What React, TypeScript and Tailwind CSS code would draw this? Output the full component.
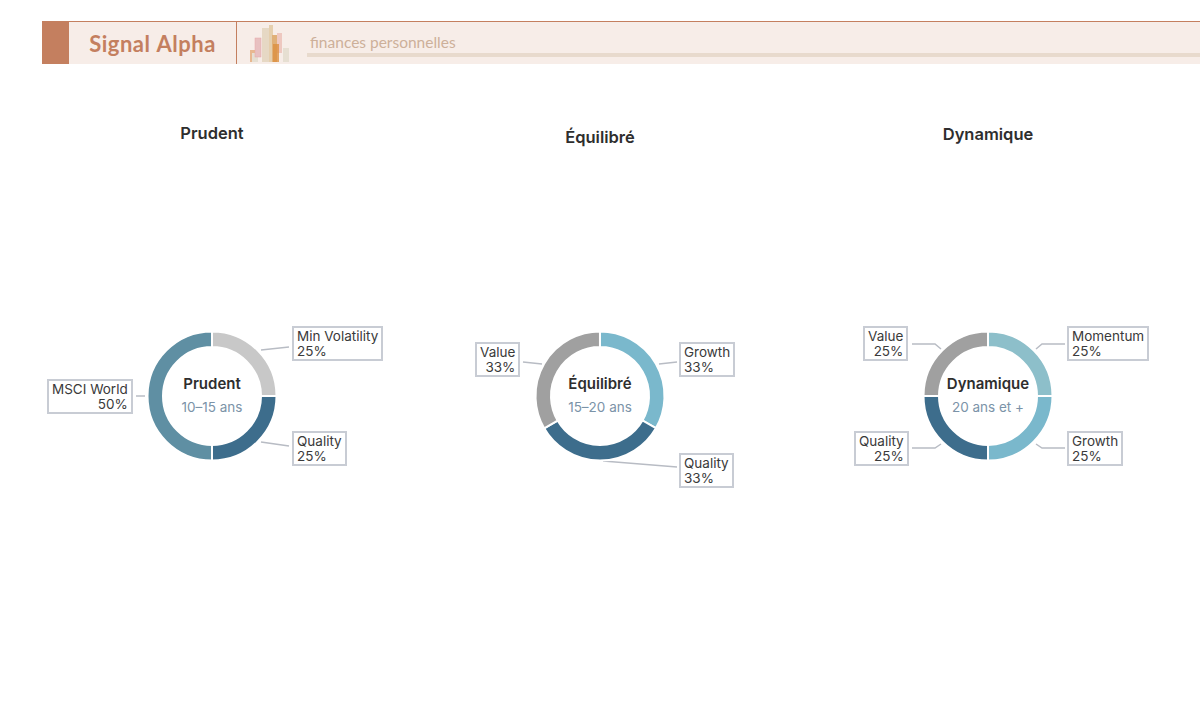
const CX = 194;
const CY = 100;
const R_OUT = 64.5;
const R_IN = 49;

type Segment = { value: number; color: string };
type Label = { name: string; pct: string; pos: string; right?: boolean };

const charts: {
  title: string;
  titleClass: string;
  sub: string;
  segments: Segment[];
  labels: Label[];
  lines: string[];
}[] = [
  {
    title: 'Prudent',
    titleClass: 'mt-[57px]',
    sub: '10–15 ans',
    segments: [
      { value: 25, color: '#c8c8c8' },
      { value: 25, color: '#3d6d8c' },
      { value: 50, color: '#5f8fa3' },
    ],
    labels: [
      { name: 'Min Volatility', pct: '25%', pos: 'left-[274px] top-[30px]' },
      { name: 'Quality', pct: '25%', pos: 'left-[274px] top-[135px]' },
      { name: 'MSCI World', pct: '50%', pos: 'left-[29px] top-[83px]', right: true },
    ],
    lines: ['243,54 271,51', '243,146 271,150', '118,100 127,100'],
  },
  {
    title: 'Équilibré',
    titleClass: 'mt-[61px]',
    sub: '15–20 ans',
    segments: [
      { value: 33.33, color: '#7ab8cc' },
      { value: 33.33, color: '#3d6d8c' },
      { value: 33.33, color: '#a0a0a0' },
    ],
    labels: [
      { name: 'Growth', pct: '33%', pos: 'left-[273px] top-[46px]' },
      { name: 'Quality', pct: '33%', pos: 'left-[273px] top-[157px]' },
      { name: 'Value', pct: '33%', pos: 'left-[69px] top-[46px]', right: true },
    ],
    lines: ['253,68 271,66', '197,165 271,171', '117,66 136,68'],
  },
  {
    title: 'Dynamique',
    titleClass: 'mt-[58px]',
    sub: '20 ans et +',
    segments: [
      { value: 25, color: '#8dbfca' },
      { value: 25, color: '#7ab8cc' },
      { value: 25, color: '#3d6d8c' },
      { value: 25, color: '#a0a0a0' },
    ],
    labels: [
      { name: 'Momentum', pct: '25%', pos: 'left-[273px] top-[30px]' },
      { name: 'Growth', pct: '25%', pos: 'left-[273px] top-[135px]' },
      { name: 'Quality', pct: '25%', pos: 'left-[60px] top-[135px]', right: true },
      { name: 'Value', pct: '25%', pos: 'left-[69px] top-[30px]', right: true },
    ],
    lines: [
      '271,48 248,48 242,53',
      '271,152 248,152 242,148',
      '118,152 141,152 147,148',
      '118,48 141,48 147,53',
    ],
  },
];

const point = (r: number, angle: number) => {
  const a = ((angle - 90) * Math.PI) / 180;
  return `${CX + r * Math.cos(a)} ${CY + r * Math.sin(a)}`;
};

const arcPath = (start: number, end: number) => {
  const large = end - start > 180 ? 1 : 0;
  return `M${point(R_OUT, start)} A${R_OUT} ${R_OUT} 0 ${large} 1 ${point(R_OUT, end)} L${point(R_IN, end)} A${R_IN} ${R_IN} 0 ${large} 0 ${point(R_IN, start)} Z`;
};

const Donut = ({ chart }: { chart: (typeof charts)[number] }) => {
  let angle = 0;
  return (
    <div className="relative mt-auto h-[200px] w-[388px]">
      <svg width="388" height="200" className="block">
        {chart.lines.map((pts, i) => (
          <polyline key={i} points={pts} fill="none" stroke="#b8bcc4" strokeWidth="1.5" />
        ))}
        {chart.segments.map((seg, i) => {
          const start = angle;
          angle += (seg.value / 100) * 360;
          return <path key={i} d={arcPath(start, angle)} fill={seg.color} stroke="#fff" strokeWidth="2" />;
        })}
      </svg>
      <div className="absolute left-[94px] top-[78px] flex w-[200px] flex-col items-center">
        <span className="text-[15px] font-semibold leading-5 text-[#2e2e2e]">{chart.title}</span>
        <span className="mt-[3px] text-[13.5px] leading-5 text-[#7b93a8]">{chart.sub}</span>
      </div>
      {chart.labels.map((label) => (
        <div
          key={label.name}
          className={`absolute h-[35px] border-2 border-[#c8ccd4] bg-white px-[3px] pt-px text-[13.5px] leading-[14.5px] text-[#3a3a3a] ${label.pos} ${label.right ? 'text-right' : 'text-left'}`}
        >
          <div className="whitespace-nowrap">{label.name}</div>
          <div>{label.pct}</div>
        </div>
      ))}
    </div>
  );
};

const Logo = () => (
  <svg width="42" height="38" viewBox="250 25 42 38" className="block">
    <rect x="250" y="50" width="7" height="12" fill="#e8b890" />
    <rect x="252" y="53" width="6" height="9" fill="#e6dfd2" />
    <rect x="255" y="38" width="6" height="19" fill="#e8c0c0" stroke="#e6a8a8" strokeWidth="0.5" />
    <rect x="262" y="28" width="7" height="34" fill="#e6d8c4" />
    <rect x="269" y="25" width="4" height="37" fill="#e5cfae" />
    <rect x="272" y="35" width="5" height="27" fill="#e0b078" />
    <rect x="277" y="33" width="5" height="20" fill="#eec8c0" />
    <rect x="273" y="44" width="6" height="18" fill="#dc9040" fillOpacity="0.8" />
    <rect x="283" y="48" width="6" height="14" fill="#e6dfd2" />
  </svg>
);

export default function App() {
  return (
    <div className="min-h-[721px] w-[1200px] bg-white pt-[21px] font-[Inter,sans-serif]">
      <header className="ml-[42px] flex h-[43px] border-t border-[#c47f5f] bg-[#f7ede8]">
        <div className="w-[27px] bg-[#c47f5f]" />
        <div className="flex w-[168px] items-center justify-center border-r border-[#c47f5f]">
          <span className="font-[Lato,sans-serif] text-[22px] font-bold tracking-[0.5px] text-[#c47f5f] [word-spacing:1px]">
            Signal Alpha
          </span>
        </div>
        <div className="ml-[13px] flex items-start pt-[3px]">
          <Logo />
        </div>
        <div className="ml-[15px] flex flex-1 flex-col">
          <span className="ml-[3px] mt-[11px] font-[Lato,sans-serif] text-[15.5px] leading-[19px] text-[#cdb09a]">
            finances personnelles
          </span>
          <div className="mt-[1px] h-[4px] bg-[#e8dacd]" />
        </div>
      </header>
      <main className="grid grid-cols-3 px-[18px]">
        {charts.map((chart) => (
          <section key={chart.title} className="flex h-[432px] flex-col">
            <h2 className={`${chart.titleClass} text-center text-[16.5px] font-semibold leading-6 text-[#2e2e2e]`}>
              {chart.title}
            </h2>
            <Donut chart={chart} />
          </section>
        ))}
      </main>
    </div>
  );
}
